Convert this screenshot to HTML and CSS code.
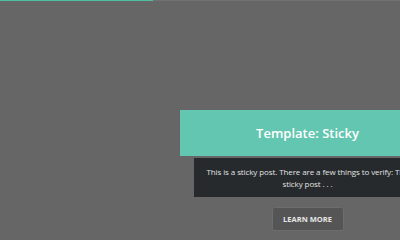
FILE: index.html
```html
<!DOCTYPE html>
<html lang="en">
<head>
    <meta charset="UTF-8">
    <meta name="viewport" content="width=device-width, initial-scale=1.0">
    <title>Template: Sticky</title>
    <link rel="stylesheet" href="styles.css">
</head>
<body>
    <div class="progress">
        <div class="progress-fill"></div>
    </div>

    <div class="stage">
        <article class="post">
            <header class="post-title">
                <h1>Template: Sticky</h1>
            </header>
            <div class="post-excerpt">
                <p>This is a sticky post. There are a few things to verify: The sticky post . . .</p>
            </div>
            <a class="more-btn" href="#">Learn More</a>
        </article>
    </div>
</body>
</html>
```

FILE: styles.css
```css
html, body {
    margin: 0;
    height: 100%;
    overflow: hidden;
}
body {
    background-color: #666666;
    font-family: "Open Sans", sans-serif;
}
.progress {
    height: 1px;
    background-color: #727272;
}
.progress-fill {
    width: 153px;
    height: 1px;
    background-color: #4fbfa3;
}
.stage {
    padding: 109px 0 0 180px;
}
.post {
    width: 255px;
    display: flex;
    flex-direction: column;
    align-items: center;
}
.post-title {
    width: 100%;
    height: 46px;
    background-color: #63c6b0;
    display: flex;
    align-items: center;
    justify-content: center;
}
.post-title h1 {
    margin: 0;
    color: #fff;
    font-size: 13px;
    font-weight: 600;
}
.post-excerpt {
    align-self: stretch;
    margin: 2px 14px 0;
    height: 39px;
    background-color: #262a2c;
    display: flex;
    align-items: center;
    justify-content: center;
    padding: 0 4px;
}
.post-excerpt p {
    margin: 0;
    color: #e2e2e2;
    font-size: 8px;
    line-height: 12px;
    letter-spacing: -0.1px;
    text-align: center;
}
.more-btn {
    margin-top: 10px;
    width: 70px;
    height: 22px;
    border: 1px solid #6d6d6d;
    border-radius: 3px;
    background-color: #555555;
    color: #e6e6e6;
    font-size: 7.5px;
    font-weight: 700;
    text-transform: uppercase;
    text-decoration: none;
    display: flex;
    align-items: center;
    justify-content: center;
}
```
